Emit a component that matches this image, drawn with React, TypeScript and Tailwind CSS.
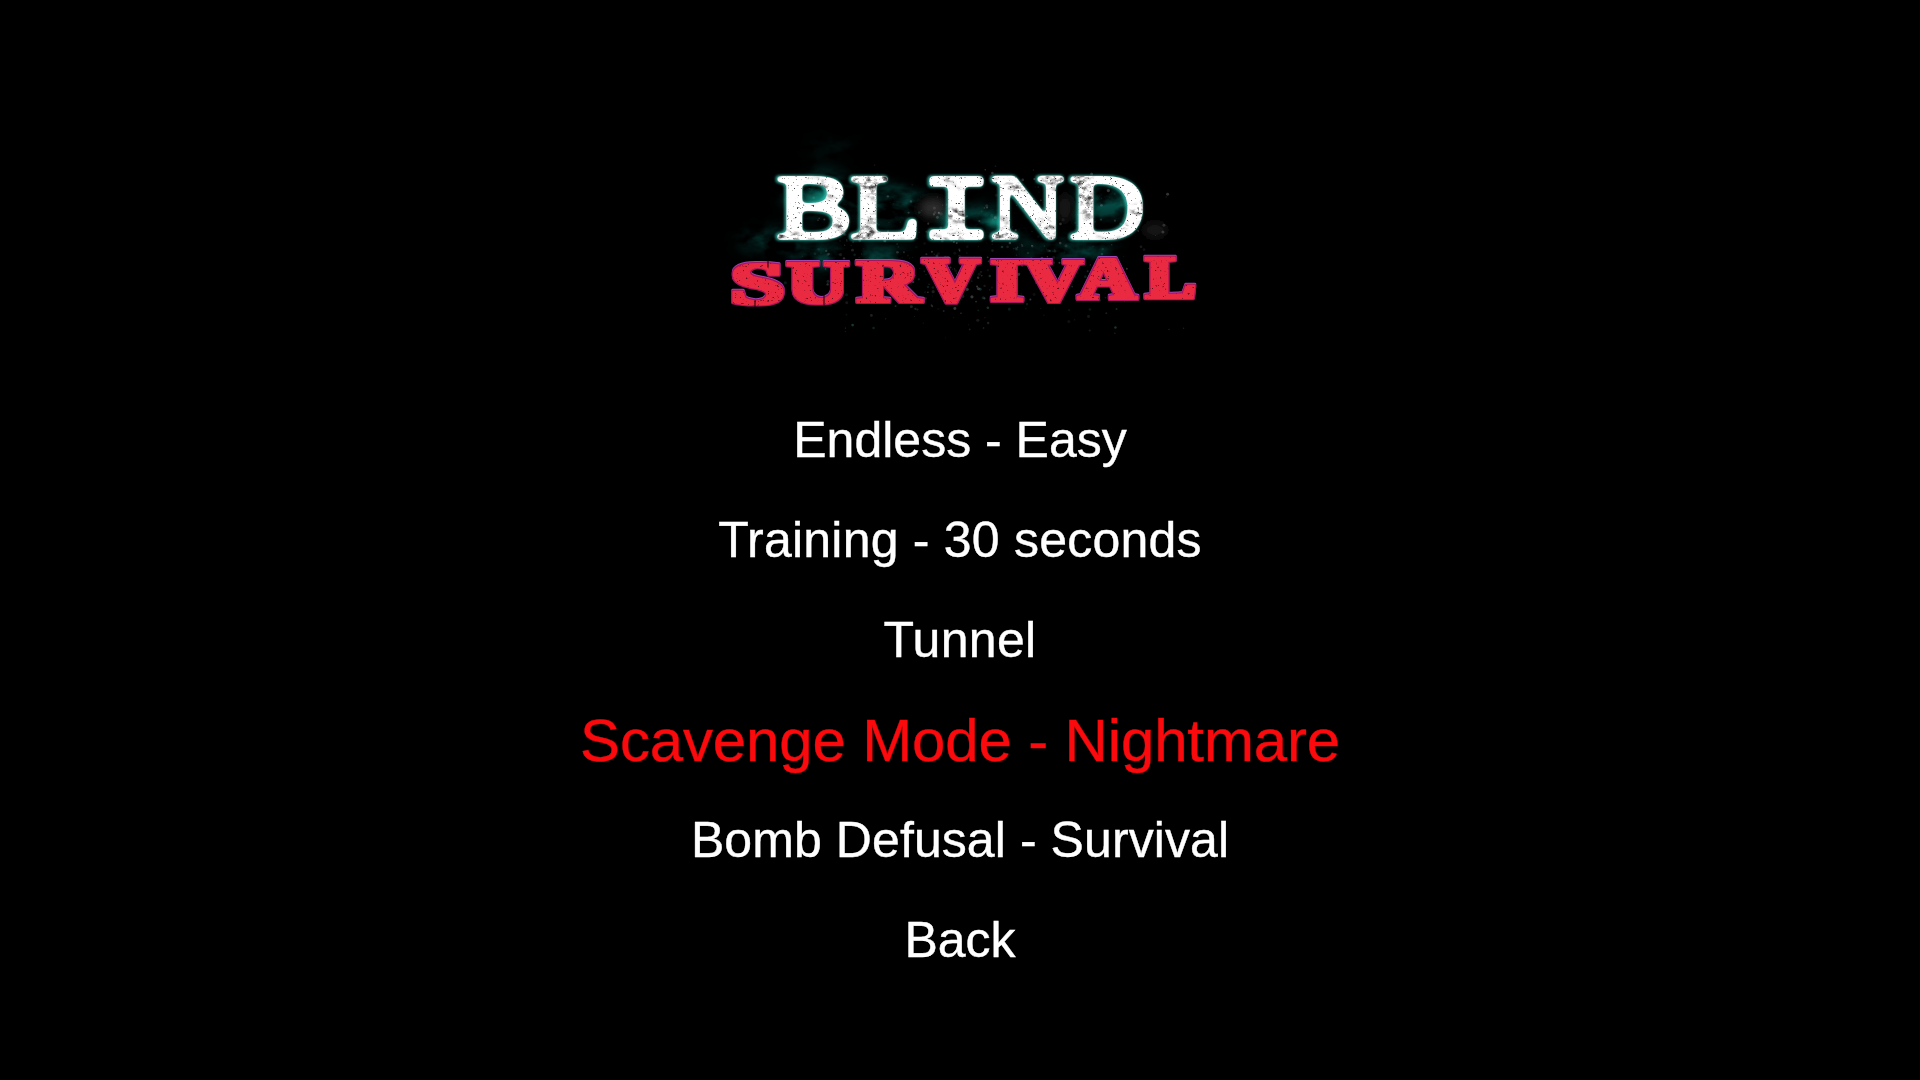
interface Glyph {
  char: string;
  font: string;
  weight: number;
  // ink edges and cap height, in thousandths of an em
  ink: [number, number];
  cap: number;
  // where the ink has to land, in logo pixels
  x: [number, number];
  y: [number, number];
}

interface MenuItem {
  label: string;
  tracking: string;
  selected?: boolean;
}

const MENU: MenuItem[] = [
  { label: "Endless - Easy", tracking: "tracking-normal" },
  { label: "Training - 30 seconds", tracking: "tracking-[0.22px]" },
  { label: "Tunnel", tracking: "tracking-[0.3px]" },
  { label: "Scavenge Mode - Nightmare", tracking: "tracking-[-0.15px]", selected: true },
  { label: "Bomb Defusal - Survival", tracking: "tracking-[0.08px]" },
  { label: "Back", tracking: "tracking-normal" },
];

const SERIF = "'Liberation Serif', serif";
const MONO = "'Liberation Mono', monospace";

const BLIND: Glyph[] = [
  { char: "B", font: SERIF, weight: 400, ink: [17, 593], cap: 662, x: [78, 144], y: [57.5, 118] },
  { char: "L", font: SERIF, weight: 400, ink: [12, 598], cap: 662, x: [151, 220], y: [57.5, 118] },
  { char: "I", font: MONO, weight: 400, ink: [92, 508], cap: 660, x: [231, 282], y: [57.5, 118] },
  { char: "N", font: SERIF, weight: 400, ink: [12, 707], cap: 662, x: [292, 363], y: [57.5, 118] },
  { char: "D", font: SERIF, weight: 400, ink: [16, 685], cap: 662, x: [371, 441], y: [57.5, 118] },
];

const SURVIVAL: Glyph[] = [
  { char: "S", font: SERIF, weight: 700, ink: [35, 513], cap: 676, x: [34, 80], y: [142, 184] },
  { char: "U", font: SERIF, weight: 700, ink: [16, 701], cap: 676, x: [89, 146], y: [141, 183] },
  { char: "R", font: SERIF, weight: 700, ink: [26, 715], cap: 676, x: [160, 219], y: [140, 182] },
  { char: "V", font: SERIF, weight: 700, ink: [16, 701], cap: 676, x: [225, 277], y: [139, 182] },
  { char: "I", font: SERIF, weight: 700, ink: [20, 370], cap: 676, x: [293, 321], y: [139, 181] },
  { char: "V", font: SERIF, weight: 700, ink: [16, 701], cap: 676, x: [327, 380], y: [139, 181] },
  { char: "A", font: SERIF, weight: 700, ink: [9, 689], cap: 676, x: [380, 433], y: [137, 179] },
  { char: "L", font: SERIF, weight: 700, ink: [19, 638], cap: 676, x: [448, 493], y: [137, 178] },
];

function Word({ glyphs, pen }: { glyphs: Glyph[]; pen: number }) {
  return (
    <>
      {glyphs.map((g, i) => {
        const sx = (g.x[1] - g.x[0]) / ((g.ink[1] - g.ink[0]) / 10);
        const sy = (g.y[1] - g.y[0]) / (g.cap / 10);
        const tx = g.x[0] - (g.ink[0] / 10) * sx;
        return (
          <text
            key={i}
            transform={`translate(${tx} ${g.y[1]}) scale(${sx} ${sy})`}
            fontFamily={g.font}
            fontWeight={g.weight}
            fontSize={100}
            strokeWidth={(pen * 2) / (sx + sy)}
          >
            {g.char}
          </text>
        );
      })}
    </>
  );
}

// small seeded generator, so the dust is the same on every render
function makeDust(count: number) {
  let seed = 41;
  const next = () => {
    seed = (seed * 16807) % 2147483647;
    return seed / 2147483647;
  };
  return Array.from({ length: count }, () => ({
    x: 70 + ((next() + next()) / 2) * 420,
    y: 40 + ((next() + next()) / 2) * 185,
    r: 0.4 + next() * 1.2,
    o: 0.06 + next() * 0.24,
    teal: next() > 0.7,
  }));
}

const DUST = makeDust(520);

function Logo() {
  return (
    <svg width="520" height="230" viewBox="0 0 520 230" role="img" aria-label="Blind Survival">
      <defs>
        <filter id="soft" x="0" y="0" width="520" height="230" filterUnits="userSpaceOnUse">
          <feGaussianBlur stdDeviation="4" />
        </filter>
        <filter id="smoke" x="0" y="0" width="520" height="230" filterUnits="userSpaceOnUse" colorInterpolationFilters="sRGB">
          <feGaussianBlur in="SourceGraphic" stdDeviation="8" result="blob" />
          <feTurbulence type="fractalNoise" baseFrequency="0.03 0.05" numOctaves="4" seed="8" />
          <feColorMatrix values="0 0 0 0 1  0 0 0 0 1  0 0 0 0 1  3 0 0 0 -1.2" result="cloud" />
          <feComposite in="blob" in2="cloud" operator="in" />
        </filter>
        <filter id="worn" x="0" y="0" width="520" height="230" filterUnits="userSpaceOnUse" colorInterpolationFilters="sRGB">
          {/* blur and re-threshold the shape, which rounds its corners */}
          <feGaussianBlur in="SourceGraphic" stdDeviation="2" />
          <feComponentTransfer result="round">
            <feFuncA type="linear" slope="5" intercept="-2" />
          </feComponentTransfer>
          <feMorphology in="round" operator="dilate" radius="0.6" />
          <feGaussianBlur stdDeviation="0.9" result="halo" />
          <feOffset in="halo" dx="-0.6" dy="-0.3" result="shifted" />
          <feFlood floodColor="#35cbb8" floodOpacity="0.7" />
          <feComposite in2="shifted" operator="in" result="glow" />
          <feTurbulence type="fractalNoise" baseFrequency="0.4" numOctaves="3" seed="5" />
          <feColorMatrix values="0 0 0 0 0.25  0 0 0 0 0.25  0 0 0 0 0.25  0 8 0 0 -5.4" result="specks" />
          <feTurbulence type="fractalNoise" baseFrequency="0.025 0.04" numOctaves="2" seed="12" />
          <feColorMatrix values="0 0 0 0 0  0 0 0 0 0  0 0 0 0 0  6 0 0 0 -2.9" result="patch" />
          <feTurbulence type="fractalNoise" baseFrequency="0.12 0.2" numOctaves="4" seed="3" />
          <feColorMatrix values="0 0 0 0 0.25  0 0 0 0 0.25  0 0 0 0 0.25  3 0 0 0 -1.3" result="grain" />
          <feComposite in="grain" in2="patch" operator="in" result="stain" />
          <feMerge result="dirt">
            <feMergeNode in="specks" />
            <feMergeNode in="stain" />
          </feMerge>
          <feComposite in="dirt" in2="round" operator="in" result="cut" />
          <feMerge>
            <feMergeNode in="glow" />
            <feMergeNode in="round" />
            <feMergeNode in="cut" />
          </feMerge>
          <feGaussianBlur stdDeviation="0.4" />
        </filter>
        <filter id="inked" x="0" y="0" width="520" height="230" filterUnits="userSpaceOnUse" colorInterpolationFilters="sRGB">
          <feMorphology in="SourceGraphic" operator="dilate" radius="1.6 0.01" result="fat" />
          <feMorphology in="fat" operator="dilate" radius="1" result="wide" />
          <feFlood floodColor="#a8145f" />
          <feComposite in2="wide" operator="in" result="rim" />
          <feOffset in="wide" dy="-0.8" result="up" />
          <feFlood floodColor="#a046b4" />
          <feComposite in2="up" operator="in" result="top" />
          <feTurbulence type="fractalNoise" baseFrequency="0.4" numOctaves="3" seed="21" />
          <feColorMatrix values="0 0 0 0 0.4  0 0 0 0 0.04  0 0 0 0 0.1  0 7 0 0 -4.7" result="specks" />
          <feComposite in="specks" in2="fat" operator="in" result="cut" />
          <feMerge>
            <feMergeNode in="top" />
            <feMergeNode in="rim" />
            <feMergeNode in="fat" />
            <feMergeNode in="cut" />
          </feMerge>
          <feGaussianBlur stdDeviation="0.5" />
        </filter>
      </defs>

      <g filter="url(#smoke)" fill="#064a44">
        <ellipse cx="120" cy="75" rx="36" ry="22" />
        <ellipse cx="75" cy="120" rx="36" ry="10" />
        <ellipse cx="190" cy="85" rx="36" ry="18" />
        <ellipse cx="285" cy="102" rx="46" ry="14" />
        <ellipse cx="405" cy="82" rx="30" ry="18" />
        <ellipse cx="150" cy="138" rx="60" ry="12" />
        <ellipse cx="370" cy="130" rx="50" ry="10" />
        <ellipse cx="130" cy="28" rx="22" ry="8" opacity="0.35" />
      </g>
      <g filter="url(#soft)">
        <ellipse cx="233" cy="88" rx="14" ry="10" fill="#2a2a2a" />
        <ellipse cx="365" cy="88" rx="8" ry="14" fill="#161616" />
        <ellipse cx="455" cy="110" rx="12" ry="8" fill="#121212" />
        <ellipse cx="117" cy="80" rx="16" ry="4" fill="#17b3a0" />
        <ellipse cx="130" cy="71" rx="5" ry="4" fill="#17b3a0" />
        <ellipse cx="297" cy="102" rx="10" ry="4" fill="#17b3a0" />
        <ellipse cx="385" cy="97" rx="4" ry="8" fill="#17b3a0" />
        <ellipse cx="426" cy="80" rx="4" ry="8" fill="#17b3a0" opacity="0.7" />
        <ellipse cx="247" cy="103" rx="4" ry="6" fill="#17b3a0" opacity="0.7" />
      </g>
      {DUST.map((d, i) => (
        <circle key={i} cx={d.x} cy={d.y} r={d.r} fill={d.teal ? "#4fb5a8" : "#b8b8b8"} opacity={d.o} />
      ))}

      <g fill="#ffffff" stroke="#ffffff" strokeLinejoin="round" filter="url(#worn)">
        <Word glyphs={BLIND} pen={4.5} />
      </g>

      <g fill="#e92a40" stroke="#e92a40" strokeLinejoin="round" filter="url(#inked)">
        <Word glyphs={SURVIVAL} pen={2.5} />
      </g>
      {/* stencil bridges */}
      <path
        d="M68 141v6M55 181v6M124 174v12"
        stroke="#1a0208"
        strokeWidth="1.3"
        strokeLinecap="round"
        opacity="0.8"
      />
    </svg>
  );
}

export default function App() {
  return (
    <div className="flex h-[1080px] w-[1920px] flex-col items-center overflow-hidden bg-black pt-[120px] font-['Liberation_Sans',Arial,sans-serif]">
      <Logo />
      <nav className="mt-10 flex flex-col items-center">
        {MENU.map((item) => (
          <button
            key={item.label}
            className={`h-[100px] whitespace-nowrap ${item.tracking} ${
              item.selected
                ? "text-[60px] leading-[102px] text-[#fa0a0c] [-webkit-text-stroke:0.4px_#fa0a0c]"
                : "text-[50px] leading-[100px] text-white [-webkit-text-stroke:0.4px_#fff]"
            }`}
          >
            {item.label}
          </button>
        ))}
      </nav>
    </div>
  );
}
